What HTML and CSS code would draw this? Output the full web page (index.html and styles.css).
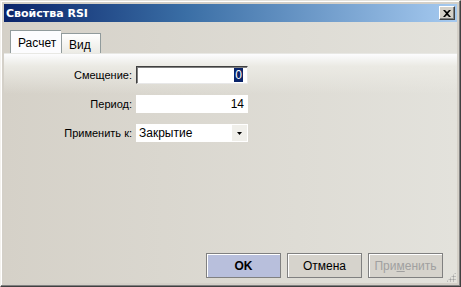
FILE: index.html
```html
<!DOCTYPE html>
<html>
<head>
    <meta charset="UTF-8">
    <title>Свойства RSI</title>
    <link rel="stylesheet" href="styles.css">
</head>
<body>
    <div class="window">
        <div class="titlebar">
            <span class="title">Свойства RSI</span>
            <div class="close-btn">
                <svg width="8" height="7" viewBox="0 0 8 7">
                    <path d="M0 0h2l2 2 2-2h2L5 3.5 8 7H6L4 5 2 7H0l3-3.5z" fill="#000"/>
                </svg>
            </div>
        </div>

        <div class="body">
            <div class="tabs">
                <div class="tab active">Расчет</div>
                <div class="tab">Вид</div>
            </div>

            <div class="panel">
                <div class="form">
                    <div class="row">
                        <label>Смещение:</label>
                        <div class="field sunken"><span class="sel">0</span></div>
                    </div>
                    <div class="row">
                        <label>Период:</label>
                        <div class="field">14</div>
                    </div>
                    <div class="row">
                        <label>Применить к:</label>
                        <div class="field combo">
                            <span class="combo-text">Закрытие</span>
                            <span class="combo-arrow">
                                <svg width="5" height="3" viewBox="0 0 5 3"><path d="M0 0h5L2.5 3z" fill="#000"/></svg>
                            </span>
                        </div>
                    </div>
                </div>

                <div class="button-group">
                    <div class="button default">OK</div>
                    <div class="button">Отмена</div>
                    <div class="button disabled">При<u>м</u>енить</div>
                </div>
                <div class="grip"></div>
            </div>
        </div>
    </div>
</body>
</html>
```

FILE: styles.css
```css
* {
    box-sizing: border-box;
}
body {
    margin: 0;
    font-family: 'Liberation Sans', 'DejaVu Sans', sans-serif;
    font-size: 12px;
}
.window {
    width: 461px;
    height: 287px;
    display: flex;
    flex-direction: column;
    padding: 3px 3px 3px 3px;
    background: #d4d0c8;
    border-top: 1px solid #e4e2dc;
    border-left: 1px solid #f4f2ee;
    border-right: 1px solid #404040;
    border-bottom: 1px solid #404040;
    box-shadow: inset -1px -1px 0 #808080, inset 1px 1px 0 #ffffff;
    position: relative;
}
.titlebar {
    height: 18px;
    flex: none;
    display: flex;
    align-items: center;
    justify-content: space-between;
    padding: 0 2px 0 2px;
    background: linear-gradient(to right, #0a246a, #3a6ea5 40%, #a6caf0);
}
.title {
    color: #ffffff;
    font-family: 'DejaVu Sans', sans-serif;
    font-weight: bold;
    font-size: 11px;
}
.close-btn {
    width: 16px;
    height: 14px;
    display: flex;
    align-items: center;
    justify-content: center;
    background: #d4d0c8;
    border-top: 1px solid #ffffff;
    border-left: 1px solid #ffffff;
    border-right: 1px solid #404040;
    border-bottom: 1px solid #404040;
    box-shadow: inset -1px -1px 0 #808080;
}
.body {
    flex: 1;
    display: flex;
    flex-direction: column;
    padding: 8px 0 0 0;
    background: linear-gradient(to right, #d5d1c8, #e3e2dc);
}
.tabs {
    display: flex;
    align-items: flex-end;
    padding-left: 6px;
    height: 23px;
    flex: none;
}
.tab {
    width: 40px;
    height: 20px;
    padding: 4px 0 0 7px;
    color: #000;
    background: linear-gradient(#ffffff, #ecebe5);
    border: 1px solid #919b9c;
    border-bottom: none;
}
.tab.active {
    height: 23px;
    width: 51px;
    padding: 5px 0 0 7px;
    background: #fcfcfe;
    border-right: none;
}
.panel {
    flex: 1;
    position: relative;
    display: flex;
    flex-direction: column;
    justify-content: space-between;
    padding: 12px 0 5px 0;
    background: linear-gradient(#fcfcfe 0, #ebeae4 12px, rgba(235, 234, 228, 0) 40px);
    border-top: 1px solid #e8e8e4;
}
.form {
    display: flex;
    flex-direction: column;
    gap: 11px;
}
.row {
    display: flex;
    align-items: center;
    gap: 4px;
}
.row label {
    width: 128px;
    text-align: right;
    font-size: 11px;
    color: #000;
}
.field {
    width: 112px;
    height: 18px;
    background: #ffffff;
    text-align: right;
    padding: 2px 4px 0 0;
    color: #000;
}
.field.sunken {
    border-top: 1px solid #404040;
    border-left: 1px solid #404040;
    border-right: 1px solid #e8e8e8;
    border-bottom: 1px solid #e8e8e8;
    box-shadow: inset 1px 1px 0 #808080;
    padding-top: 1px;
}
.sel {
    background: #0a246a;
    color: #ffffff;
    padding: 0 1px;
}
.field.combo {
    display: flex;
    justify-content: space-between;
    align-items: center;
    padding: 0 1px 0 3px;
    text-align: left;
}
.combo-arrow {
    width: 15px;
    height: 16px;
    display: flex;
    align-items: center;
    justify-content: center;
    background: #f0efea;
}
.button-group {
    display: flex;
    justify-content: flex-end;
    gap: 6px;
    padding-right: 14px;
}
.button {
    width: 75px;
    height: 25px;
    display: flex;
    align-items: center;
    justify-content: center;
    background: #d6d3cc;
    border: 1px solid #808080;
    box-shadow: inset 1px 1px 0 #ffffff;
    color: #000;
}
.button.default {
    background: #b8bfdc;
    font-weight: bold;
}
.button.disabled {
    color: #a0a0a0;
}
.grip {
    position: absolute;
    right: 1px;
    bottom: 1px;
    width: 10px;
    height: 10px;
    background:
        radial-gradient(circle, #a0a0a0 45%, transparent 50%) 0 0 / 3px 3px;
    clip-path: polygon(100% 0, 100% 100%, 0 100%);
}
```
